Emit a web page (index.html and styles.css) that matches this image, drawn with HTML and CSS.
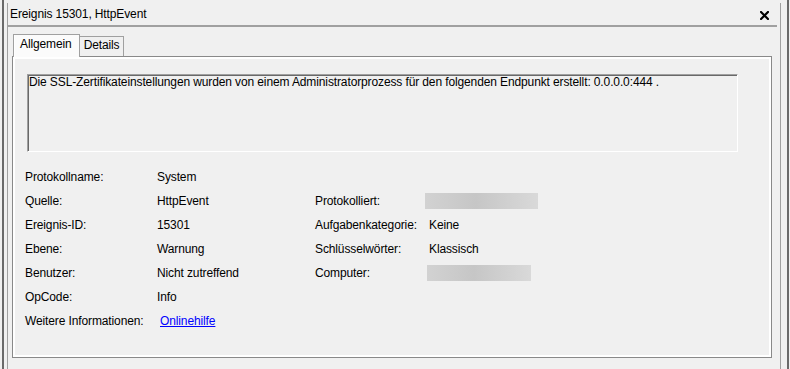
FILE: index.html
```html
<!DOCTYPE html>
<html lang="de">
<head>
    <meta charset="UTF-8">
    <meta name="viewport" content="width=device-width, initial-scale=1.0">
    <title>Ereignis 15301, HttpEvent</title>
    <link rel="stylesheet" href="styles.css">
</head>
<body>
    <div class="window">
        <div class="dialog">
            <!-- title bar -->
            <div class="titlebar">
                <span class="title">Ereignis 15301, HttpEvent</span>
                <svg class="close" width="9" height="9" viewBox="0 0 9 9">
                    <path d="M1 1 L8 8 M8 1 L1 8" stroke="#000" stroke-width="2.2" stroke-linecap="square" fill="none"/>
                </svg>
            </div>

            <!-- tabs -->
            <div class="content">
                <div class="tabs">
                    <div class="tab tab-active">Allgemein</div>
                    <div class="tab">Details</div>
                </div>

                <div class="panel">
                    <div class="message">Die SSL-Zertifikateinstellungen wurden von einem Administratorprozess für den folgenden Endpunkt erstellt: 0.0.0.0:444 .</div>

                    <div class="details">
                        <div>Protokollname:</div>
                        <div>System</div>
                        <div></div>
                        <div></div>

                        <div>Quelle:</div>
                        <div>HttpEvent</div>
                        <div>Protokolliert:</div>
                        <div><span class="blur blur-date"></span></div>

                        <div>Ereignis-ID:</div>
                        <div>15301</div>
                        <div>Aufgabenkategorie:</div>
                        <div class="value2">Keine</div>

                        <div>Ebene:</div>
                        <div>Warnung</div>
                        <div>Schlüsselwörter:</div>
                        <div class="value2">Klassisch</div>

                        <div>Benutzer:</div>
                        <div>Nicht zutreffend</div>
                        <div>Computer:</div>
                        <div><span class="blur blur-computer"></span></div>

                        <div>OpCode:</div>
                        <div>Info</div>
                        <div></div>
                        <div></div>

                        <div>Weitere Informationen:</div>
                        <div><a href="#" class="link">Onlinehilfe</a></div>
                        <div></div>
                        <div></div>
                    </div>
                </div>
            </div>
        </div>
    </div>
</body>
</html>
```

FILE: styles.css
```css
body{
    margin: 0;
    background-color: #f0f0f0;
    font-family: "Liberation Sans", Arial, sans-serif;
    font-size: 12px;
    line-height: 15px;
    letter-spacing: -0.12px;
    color: #000;
}
.window{
    margin-left: 2px;
    width: 787px;
    height: 369px;
    box-sizing: border-box;
    border-left: 2px solid #6a6a6a;
    border-right: 2px solid #6a6a6a;
    padding: 3px 6px 0 3px;
}
.dialog{
    height: 100%;
    border-left: 1px solid #a0a0a0;
    border-right: 1px solid #a0a0a0;
}
.titlebar{
    display: flex;
    justify-content: space-between;
    align-items: center;
    height: 24px;
    box-sizing: border-box;
    margin-right: 3px;
    padding: 1px 8px 0 2px;
    border-bottom: 2px solid #a0a0a0;
}
.close{
    margin-top: 1px;
}
.content{
    padding-left: 4px;
    padding-right: 8px;
}
.tabs{
    display: flex;
    align-items: flex-end;
    margin-top: 7px;
    padding-left: 1px;
}
.tab{
    height: 20px;
    box-sizing: border-box;
    padding: 1px 4px 0 4px;
    border-top: 1px solid #a0a0a0;
    border-right: 1px solid #a0a0a0;
    background-color: #f0f0f0;
}
.tab-active{
    position: relative;
    z-index: 1;
    height: 23px;
    margin-bottom: -1px;
    padding: 2px 7px 0 6px;
    border-left: 1px solid #a0a0a0;
    background-color: #fbfbfb;
    box-shadow: inset 1px 0 0 #fff;
}
.panel{
    height: 302px;
    box-sizing: border-box;
    border: 1px solid #898989;
    box-shadow: inset 0 0 0 2px #fff;
    padding-top: 17px;
}
.message{
    height: 78px;
    box-sizing: border-box;
    margin: 0 33px 0 14px;
    padding-left: 1px;
    border: 1px solid;
    border-color: #a0a0a0 #fff #fff #a0a0a0;
    box-shadow: inset 1px 1px 0 #696969;
}
.details{
    display: grid;
    grid-template-columns: 132px 158px 112px 1fr;
    grid-auto-rows: 24px;
    align-items: center;
    margin-top: 13px;
    padding-left: 12px;
}
.value2{
    padding-left: 2px;
}
.blur{
    display: block;
    height: 16px;
    background: linear-gradient(90deg, #d2d2d2, #c6c6c6 45%, #d9d9d9);
    filter: blur(0.6px);
}
.blur-date{
    width: 113px;
    margin-left: -2px;
}
.blur-computer{
    width: 104px;
}
.link{
    margin-left: 3px;
    color: #0000ff;
}
```
